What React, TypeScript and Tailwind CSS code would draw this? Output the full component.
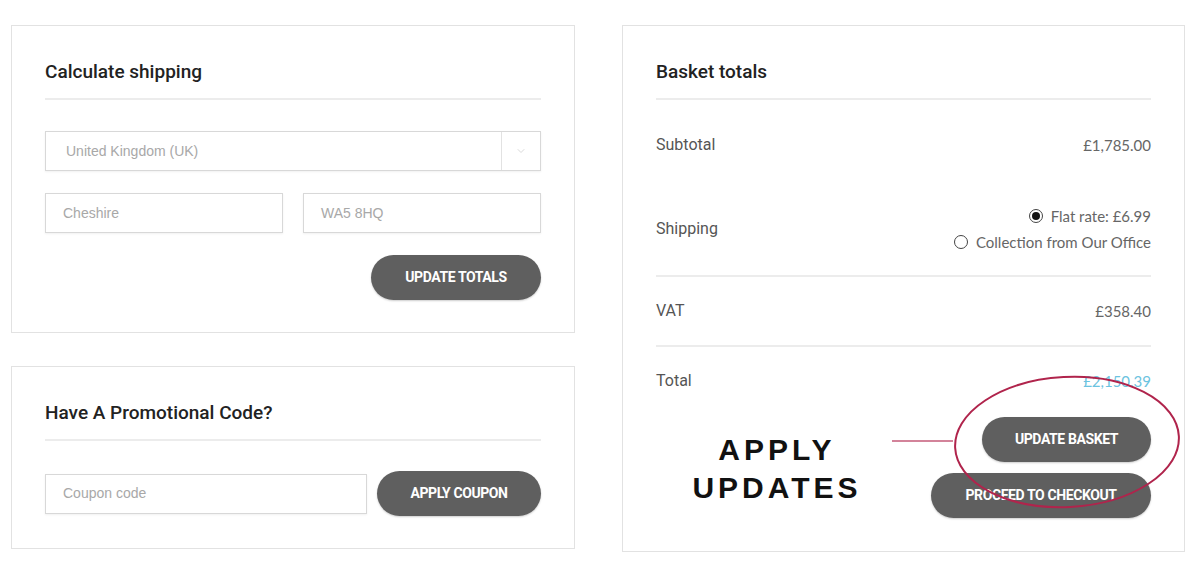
import { ChevronDown } from "lucide-react";

const heading = "font-['Roboto',sans-serif] font-medium text-[19px] leading-[28px] text-[#222]";
const label = "font-['Roboto',sans-serif] text-[16px] leading-[22px] text-[#555]";
const valueBase = "font-['Lato',sans-serif] text-[15px] leading-[22px]";
const value = valueBase + " text-[#666]";
const field =
  "h-[40px] border border-[#d8d8d8] shadow-[0_1px_2px_rgba(0,0,0,0.06)] bg-white flex items-center font-['Liberation_Sans',Arial,sans-serif] text-[14px] text-[#a8a8a8]";
const pill =
  "h-[45px] rounded-full bg-[#5f5f5f] text-white font-['Roboto',sans-serif] font-bold text-[14px] tracking-[-0.4px] uppercase flex items-center justify-center shadow-[0_1px_2px_rgba(0,0,0,0.2)]";

function Divider() {
  return <div className="h-[2px] bg-[#ececec]" />;
}

function Radio({ checked }: { checked?: boolean }) {
  return (
    <span className="w-[14px] h-[14px] rounded-full border border-[#444] flex items-center justify-center bg-white">
      {checked && <span className="w-[8px] h-[8px] rounded-full bg-[#111]" />}
    </span>
  );
}

function ShippingCard() {
  return (
    <div className="border border-[#e2e2e2] px-[33px] pt-[32px] pb-[32px] flex flex-col">
      <h3 className={heading}>Calculate shipping</h3>
      <div className="mt-[12px]">
        <Divider />
      </div>
      <div className={field + " mt-[31px]"}>
        <span className="flex-1 pl-[20px]">United Kingdom (UK)</span>
        <span className="w-[39px] h-full border-l border-[#e2e2e2] flex items-center justify-center text-[#ccc]">
          <ChevronDown size={12} strokeWidth={1.5} />
        </span>
      </div>
      <div className="mt-[22px] grid grid-cols-2 gap-[20px]">
        <div className={field + " pl-[17px]"}>Cheshire</div>
        <div className={field + " pl-[17px]"}>WA5 8HQ</div>
      </div>
      <div className="mt-[22px] flex justify-end">
        <button className={pill + " w-[170px]"}>Update totals</button>
      </div>
    </div>
  );
}

function PromoCard() {
  return (
    <div className="border border-[#e2e2e2] px-[33px] pt-[32px] pb-[32px] flex flex-col">
      <h3 className={heading}>Have A Promotional Code?</h3>
      <div className="mt-[12px]">
        <Divider />
      </div>
      <div className="mt-[30px] flex items-center">
        <div className={field + " w-[322px] pl-[17px]"}>Coupon code</div>
        <button className={pill + " w-[164px] h-[44px] ml-auto"}>Apply coupon</button>
      </div>
    </div>
  );
}

function TotalsCard() {
  return (
    <div className="w-[563px] h-[527px] border border-[#e2e2e2] px-[33px] pt-[32px] flex flex-col">
      <h3 className={heading}>Basket totals</h3>
      <div className="mt-[12px]">
        <Divider />
      </div>
      <div className="pt-[34px] flex justify-between">
        <span className={label}>Subtotal</span>
        <span className={value}>£1,785.00</span>
      </div>
      <div className="pt-[49px] pb-[22px] flex justify-between items-center">
        <span className={label}>Shipping</span>
        <div className="flex flex-col items-end gap-[4px]">
          <span className={value + " flex items-center gap-[8px]"}>
            <Radio checked />
            Flat rate: £6.99
          </span>
          <span className={value + " flex items-center gap-[8px]"}>
            <Radio />
            Collection from Our Office
          </span>
        </div>
      </div>
      <Divider />
      <div className="py-[23px] flex justify-between">
        <span className={label}>VAT</span>
        <span className={value}>£358.40</span>
      </div>
      <Divider />
      <div className="pt-[23px] flex justify-between">
        <span className={label}>Total</span>
        <span className={valueBase + " text-[#6cc3e0]"}>£2,150.39</span>
      </div>
      <div className="mt-[25px] flex flex-col items-end gap-[11px]">
        <button className={pill + " w-[169px]"}>Update basket</button>
        <button className={pill + " w-[220px]"}>Proceed to checkout</button>
      </div>
    </div>
  );
}

export default function App() {
  return (
    <div className="relative w-[1200px] h-[581px] bg-white overflow-hidden">
      <div className="flex gap-[47px] pl-[11px] pt-[25px]">
        <div className="w-[564px] flex flex-col gap-[33px]">
          <ShippingCard />
          <PromoCard />
        </div>
        <TotalsCard />
      </div>

      {/* annotation overlay */}
      <div className="absolute left-[660px] top-[431px] w-[234px] text-center font-['Liberation_Sans',Arial,sans-serif] font-bold text-[30px] leading-[38px] tracking-[4px] text-[#111]">
        <div>APPLY</div>
        <div>UPDATES</div>
      </div>
      <svg className="absolute left-0 top-0 pointer-events-none" width="1200" height="581">
        <line x1="892" y1="441" x2="953" y2="441" stroke="#c45a78" strokeWidth="1.5" />
        <ellipse cx="1067" cy="442" rx="112" ry="65" fill="none" stroke="#b0244c" strokeWidth="2" transform="rotate(-3 1067 442)" />
      </svg>
    </div>
  );
}
